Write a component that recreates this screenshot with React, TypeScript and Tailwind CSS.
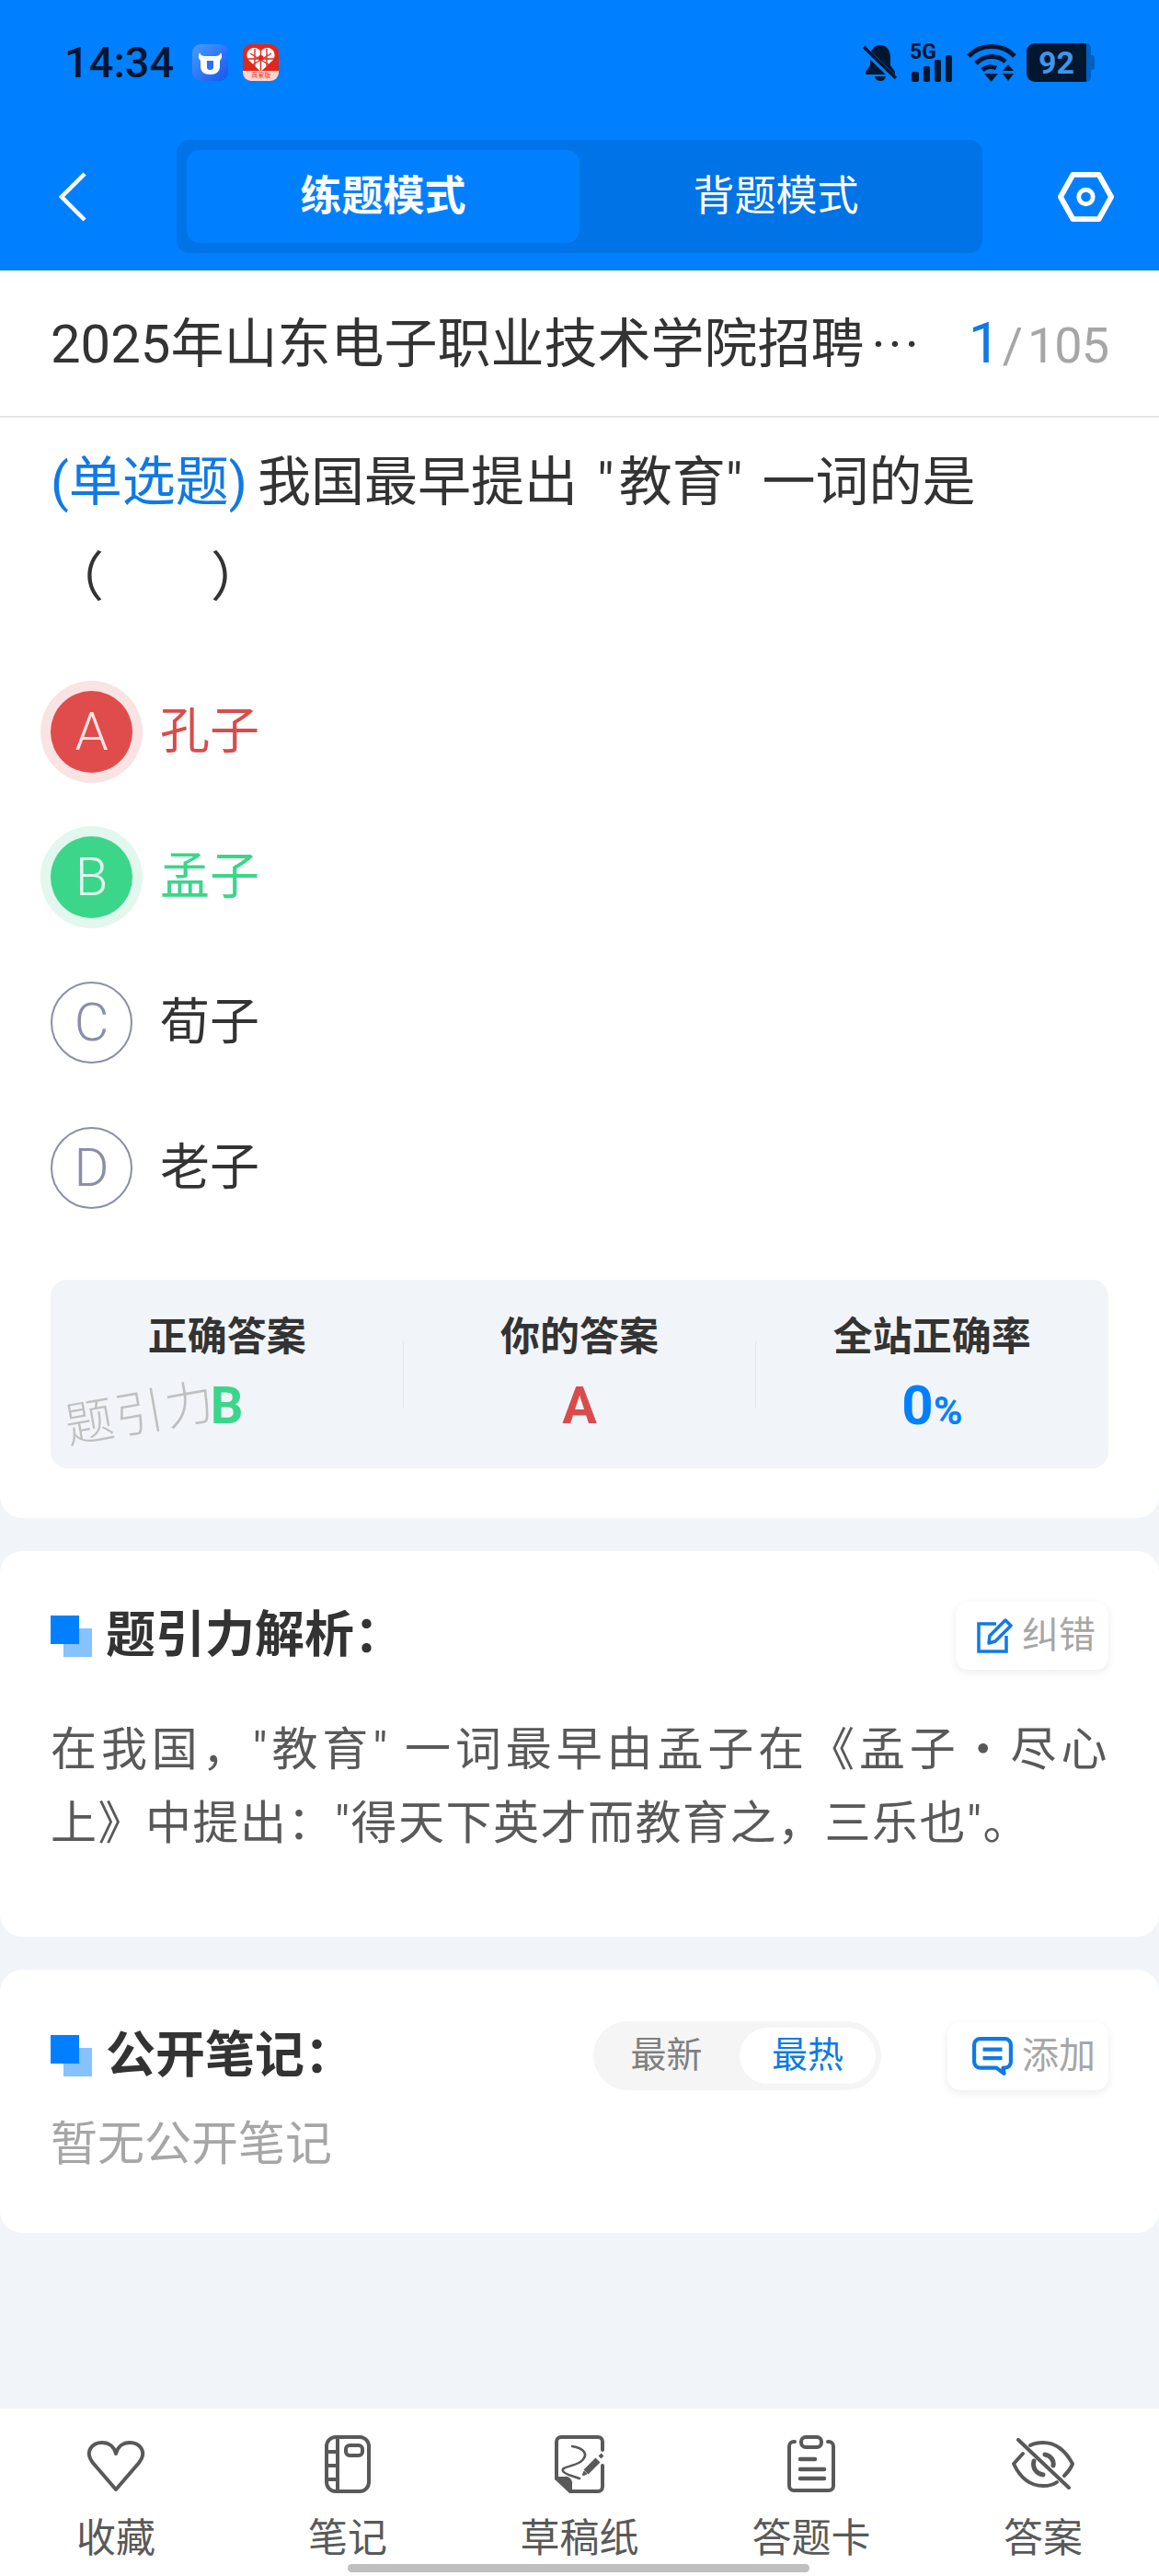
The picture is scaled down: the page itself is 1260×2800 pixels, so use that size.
import type { ReactNode } from 'react'

const HeartIcon = () => (
  <svg className="mt-[6px]" width="64" height="58" viewBox="0 0 64 58" fill="none" stroke="#595959" strokeWidth="4" strokeLinejoin="round">
    <path d="M32 54 L7 25 C-3 12 7 3 17 3 C24 3 30 7 32 15 C34 7 40 3 47 3 C57 3 67 12 57 25 Z" />
  </svg>
)

const NotebookIcon = () => (
  <svg width="50" height="63" viewBox="0 0 50 63" fill="none" stroke="#595959" strokeWidth="4">
    <rect x="2" y="2" width="46" height="59" rx="10" />
    <path d="M14 2 V61 M2 18 H14 M2 33 H14 M2 48 H14" />
    <rect x="23" y="11" width="18" height="11" rx="4" />
  </svg>
)

const SketchIcon = () => (
  <svg width="54" height="63" viewBox="14 13 54 63" fill="none" stroke="#595959" strokeWidth="4" strokeLinecap="round" strokeLinejoin="round">
    <path d="M16 60 V20 a5 5 0 0 1 5 -5 H61 a5 5 0 0 1 5 5 V29 M66 46 V69 a5 5 0 0 1 -5 5 H31" />
    <path d="M16 60 L31 74 V66 a5 5 0 0 0 -6 -6 Z" fill="#595959" />
    <path d="M33 25 C46 27 52 34 42 42 C32 48 21 47 23 52 C25 56 34 57 41 60" strokeWidth="2.6" />
    <path d="M48 53 L61 40" strokeWidth="7" strokeLinecap="butt" />
    <path d="M63 37 L66 34" strokeWidth="4" strokeLinecap="butt" />
    <path d="M45 56 L46 53 L48 55 Z" strokeWidth="2" fill="#595959" />
  </svg>
)

const ClipboardIcon = () => (
  <svg width="54" height="63" viewBox="0 0 54 63" fill="none" stroke="#595959" strokeWidth="4" strokeLinecap="round">
    <path d="M9 7 H8 a5 5 0 0 0 -5 5 V55 a5 5 0 0 0 5 5 H46 a5 5 0 0 0 5 -5 V12 a5 5 0 0 0 -5 -5 H45" />
    <rect x="16" y="2" width="22" height="11" rx="5" />
    <path d="M15 26 H31 M15 37 H41 M15 47 H41" strokeWidth="4.5" />
  </svg>
)

const EyeOffIcon = () => (
  <svg width="70" height="56" viewBox="0 0 70 56" fill="none" stroke="#595959" strokeWidth="4" strokeLinecap="round" strokeLinejoin="round">
    <path d="M13 17 L3 28 C10 43 21 52 35 52 C41 52 46 51 50 48" />
    <path d="M21 8 C25 6 30 5 35 5 C49 5 60 15 67 28 C65 34 61 38 58 41" />
    <path d="M37 18 C43 19 47 24 46 30" strokeWidth="5" />
    <path d="M25 25 C23 33 28 39 35 40" strokeWidth="5" />
    <path d="M8 2 L63 54" />
  </svg>
)

const BullLogo = () => (
  <svg width="39" height="40" viewBox="0 0 39 40">
    <defs>
      <linearGradient id="bull" x1="0" y1="0" x2="1" y2="1">
        <stop offset="0" stopColor="#4a9bff" />
        <stop offset="1" stopColor="#1458ee" />
      </linearGradient>
    </defs>
    <rect width="39" height="40" rx="9" fill="url(#bull)" />
    <path d="M8 9 C9 12 11 13 14 13 H25 C28 13 30 12 31 9 C33 13 32 16 30 18 V24 C30 30 26 33 19.5 33 C13 33 9 30 9 24 V18 C7 16 6 13 8 9 Z" fill="#fff" />
    <path d="M16 18 H23 V25 C23 27 22 28 19.5 28 C17 28 16 27 16 25 Z" fill="#2a72f5" />
  </svg>
)

const ShopLogo = () => (
  <div className="relative w-[39px] h-[40px] rounded-[9px] overflow-hidden bg-[#e0281c]">
    <svg className="absolute inset-0" width="39" height="40" viewBox="0 0 39 40">
      <path d="M19.5 30 L6 17 C2 11 6 4 12 4 C15 4 18 5 19.5 8 C21 5 24 4 27 4 C33 4 37 11 33 17 Z" fill="#fff" />
      <path d="M19.5 6 V30 M8 10 L31 24 M31 10 L8 24 M5 16 H34 M13 5 L13 24 M26 5 L26 24" stroke="#e0281c" strokeWidth="1.4" />
      <circle cx="19.5" cy="15" r="3" fill="#e0281c" />
    </svg>
    <div className="absolute bottom-0 left-0 right-0 h-[11px] bg-[#fbd5cf] text-[7px] leading-[11px] text-center text-[#d9362b] whitespace-nowrap">
      商家版
    </div>
  </div>
)

const StatusIcons = () => (
  <div className="flex items-center">
    <svg width="40" height="42" viewBox="0 0 40 42">
      <path d="M20 2 C27 2 31 8 31 15 V24 L36 31 V34 H4 V31 L9 24 V15 C9 8 13 2 20 2 Z" fill="#00172f" />
      <path d="M14 36 H26 C25 40 23 41 20 41 C17 41 15 40 14 36 Z" fill="#00172f" />
      <path d="M1 5 L37 40" stroke="#0080ff" strokeWidth="7" />
      <path d="M2 4 L37 38" stroke="#00172f" strokeWidth="3.5" />
    </svg>
    <div className="relative w-[50px] h-[42px] ml-[12px]">
      <span className="absolute left-0 top-[-6px] text-[23px] leading-[32px] font-bold text-[#00172f]">5G</span>
      <div className="absolute left-[2px] bottom-0 flex items-end gap-[5px]">
        <div className="w-[8px] h-[11px] rounded-[2px] bg-[#00172f]" />
        <div className="w-[7px] h-[17px] rounded-[2px] bg-[#00172f]" />
        <div className="w-[7px] h-[24px] rounded-[2px] bg-[#00172f]" />
        <div className="w-[7px] h-[29px] rounded-[2px] bg-[#00172f]" />
      </div>
    </div>
    <svg className="ml-[12px]" width="54" height="42" viewBox="0 0 54 42" fill="none" stroke="#00172f" strokeWidth="5">
      <path d="M2 14 C15 0 39 0 52 14" />
      <path d="M10 22 C18 13 33 12 42 20" />
      <path d="M17 29 C22 25 28 25 32 27" />
      <path d="M19 33 H34 L26.5 42 Z" fill="#00172f" stroke="none" />
      <path d="M45 23 L51 30 H39 Z M39 33 H51 L45 41 Z" fill="#00172f" stroke="none" />
    </svg>
    <div className="ml-[11px] w-[74px] h-[42px] flex items-center">
      <div className="w-[65px] h-[42px] rounded-l-[9px] bg-[#00172f] flex items-center justify-center text-[34px] font-bold text-[#3f96ee] leading-none">
        92
      </div>
      <div className="w-[5px] h-[42px] rounded-r-[6px] bg-[#0060c4]" />
      <div className="w-[4px] h-[16px] rounded-r-[3px] bg-[#0060c4]" />
    </div>
  </div>
)

const SectionMark = () => (
  <div className="relative w-[45px] h-[45px] shrink-0">
    <div className="absolute right-0 bottom-0 w-[31px] h-[31px] bg-[#85c2ff]" />
    <div className="absolute left-0 top-0 w-[31px] h-[31px] bg-[#0080ff]" />
  </div>
)

const ToolButton = ({ icon, label, width }: { icon: ReactNode; label: string; width: string }) => (
  <div className={`${width} h-[74px] rounded-[14px] bg-white shadow-[0_3px_10px_rgba(0,0,0,0.08)] flex items-center justify-end pr-[14px] gap-[10px] text-[40px] text-[#a6a6a6]`}>
    {icon}
    <span>{label}</span>
  </div>
)

const options = [
  { key: 'A', text: '孔子', state: 'wrong' },
  { key: 'B', text: '孟子', state: 'right' },
  { key: 'C', text: '荀子', state: 'none' },
  { key: 'D', text: '老子', state: 'none' },
]

const navItems = [
  { label: '收藏', icon: <HeartIcon /> },
  { label: '笔记', icon: <NotebookIcon /> },
  { label: '草稿纸', icon: <SketchIcon /> },
  { label: '答题卡', icon: <ClipboardIcon /> },
  { label: '答案', icon: <EyeOffIcon /> },
]

export default function App() {
  return (
    <div className="relative w-full min-h-[2800px] flex flex-col bg-[#f1f5f9] font-['Roboto','Noto_Sans_CJK_SC',sans-serif] text-[#333333]">
      {/* header */}
      <div className="h-[294px] bg-[#0080ff]">
        <div className="h-[152px] pt-[47px] pl-[70px] pr-[70px] flex items-start justify-between">
          <div className="flex items-center h-[42px]">
            <span className="text-[47px] leading-[42px] font-medium text-[#00172f]">14:34</span>
            <div className="ml-[20px]"><BullLogo /></div>
            <div className="ml-[16px]"><ShopLogo /></div>
          </div>
          <StatusIcons />
        </div>
        <div className="flex items-center pl-[64px]">
          <svg width="30" height="54" viewBox="0 0 30 54" fill="none" stroke="#ffffff" strokeWidth="4.5">
            <path d="M28 2 L3 27 L28 52" />
          </svg>
          <div className="ml-[98px] w-[876px] h-[123px] p-[11px] rounded-[14px] bg-[#0073e6] flex">
            <div className="w-[427px] rounded-[14px] bg-[#0080ff] flex items-center justify-center text-[45px] font-bold text-white">
              练题模式
            </div>
            <div className="flex-1 flex items-center justify-center text-[45px] text-white">背题模式</div>
          </div>
          <svg className="ml-[82px]" width="61" height="56" viewBox="0 0 63 56" fill="none" stroke="#ffffff" strokeWidth="6" strokeLinejoin="round">
            <path d="M17 3 H46 L60 28 L46 53 H17 L3 28 Z" />
            <circle cx="31.5" cy="28" r="8" strokeWidth="5" />
          </svg>
        </div>
      </div>

      {/* question card */}
      <div className="bg-white rounded-b-[24px] pb-[54px]">
        <div className="h-[160px] pt-[2px] px-[55px] border-b-2 border-[#e5e5e5] flex items-center justify-between">
          <div className="text-[58px] leading-[80px] whitespace-nowrap">
            2025年山东电子职业技术学院招聘<span className="ml-[8px] tracking-[3px]">···</span>
          </div>
          <div className="flex items-baseline">
            <span className="text-[62px] leading-[80px] text-[#0f7ae5]">1</span>
            <span className="ml-[2px] text-[54px] leading-[80px] text-[#a6a6a6]">/</span>
            <span className="ml-[5px] text-[54px] leading-[80px] tracking-[-1px] text-[#a6a6a6]">105</span>
          </div>
        </div>

        <div className="mt-[18px] px-[55px] text-[58px] leading-[104px]">
          <div className="whitespace-nowrap">
            <span className="text-[#0f7ae5]">(单选题)</span>
            <span className="ml-[11px]">我国最早提出</span>
            <span className="ml-[21px] tracking-[5px]">"</span>教育"
            <span className="ml-[7px]"> 一词的是</span>
          </div>
          <div>（　　）</div>
        </div>

        <div className="mt-[36px] px-[55px] flex flex-col">
          {options.map((o) => (
            <div key={o.key} className="h-[158px] flex items-center">
              {o.state === 'wrong' && (
                <div className="w-[89px] h-[89px] rounded-full bg-[#e04b4b] ring-[11px] ring-[#f9e3e3] flex items-center justify-center text-[58px] font-light text-[#fbe3e3]">
                  {o.key}
                </div>
              )}
              {o.state === 'right' && (
                <div className="w-[89px] h-[89px] rounded-full bg-[#3bd68a] ring-[11px] ring-[#e2f7ed] flex items-center justify-center text-[58px] font-light text-[#e2f7ed]">
                  {o.key}
                </div>
              )}
              {o.state === 'none' && (
                <div className="w-[89px] h-[89px] rounded-full border-[2.5px] border-[#8a8fa8] flex items-center justify-center text-[58px] font-light text-[#8a8fa8]">
                  {o.key}
                </div>
              )}
              <span
                className={
                  o.state === 'wrong'
                    ? 'ml-[30px] text-[54px] text-[#d94c4c]'
                    : o.state === 'right'
                      ? 'ml-[30px] text-[54px] text-[#3bd68a]'
                      : 'ml-[30px] text-[54px] text-[#333333]'
                }
              >
                {o.text}
              </span>
            </div>
          ))}
        </div>

        <div className="relative mt-[43px] mx-[55px] h-[205px] rounded-[18px] bg-[#f1f5f9] grid grid-cols-3">
          <div className="flex flex-col items-center pt-[32px]">
            <div className="text-[43px] leading-[60px] font-bold">正确答案</div>
            <div className="mt-[15px] text-[56px] leading-[60px] font-bold text-[#3bd68a]">B</div>
          </div>
          <div className="flex flex-col items-center pt-[32px] relative">
            <div className="absolute left-0 top-[67px] h-[73px] w-[1px] bg-[#e4e7eb]" />
            <div className="absolute right-0 top-[67px] h-[73px] w-[1px] bg-[#e4e7eb]" />
            <div className="text-[43px] leading-[60px] font-bold">你的答案</div>
            <div className="mt-[15px] text-[56px] leading-[60px] font-bold text-[#d94c4c]">A</div>
          </div>
          <div className="flex flex-col items-center pt-[32px]">
            <div className="text-[43px] leading-[60px] font-bold">全站正确率</div>
            <div className="mt-[15px] text-[60px] leading-[60px] font-bold text-[#0080ff]">
              0<span className="text-[43px]">%</span>
            </div>
          </div>
          <div className="absolute left-[15px] top-[114px] text-[53px] leading-[64px] text-[#bfbfbf] font-light rotate-[-10deg] tracking-[2px]">
            题引力
          </div>
        </div>
      </div>

      {/* analysis card */}
      <div className="mt-[36px] bg-white rounded-[24px] px-[55px] pt-[55px] pb-[83px]">
        <div className="flex items-center justify-between">
          <div className="flex items-center">
            <SectionMark />
            <span className="ml-[15px] text-[54px] font-bold leading-[74px]">题引力解析：</span>
          </div>
          <ToolButton
            width="w-[166px]"
            label="纠错"
            icon={
              <svg width="40" height="40" viewBox="0 0 40 40" fill="none" stroke="#0f7ae5" strokeWidth="3.5">
                <path d="M22 7 H3 V37 H33 V20" />
                <path d="M14 28 L15 20 L32 3 L38 9 L21 26 Z" strokeLinejoin="round" />
              </svg>
            }
          />
        </div>
        <div className="mt-[47px] text-[50px] leading-[80px] tracking-[1.5px] text-[#595959] text-justify">
          在我国，"教育" 一词最早由孟子在《孟子・尽心上》中提出："得天下英才而教育之，三乐也"。
        </div>
      </div>

      {/* notes card */}
      <div className="mt-[36px] bg-white rounded-[24px] px-[55px] pt-[56px] pb-[61px]">
        <div className="flex items-center">
          <SectionMark />
          <span className="ml-[15px] text-[54px] font-bold leading-[74px]">公开笔记：</span>
          <div className="ml-auto w-[313px] h-[75px] rounded-full bg-[#f5f5f5] flex items-center pr-[6px] text-[39px]">
            <span className="flex-1 text-center text-[#808080]">最新</span>
            <span className="w-[148px] h-[61px] rounded-full bg-white flex items-center justify-center text-[#0f7ae5]">最热</span>
          </div>
          <div className="ml-[72px]">
            <ToolButton
              width="w-[175px]"
              label="添加"
              icon={
                <svg width="44" height="42" viewBox="0 0 42 40" fill="none" stroke="#0f7ae5" strokeWidth="4" strokeLinejoin="round">
                  <path d="M8 2 H34 a6 6 0 0 1 6 6 V26 a6 6 0 0 1 -6 6 H32 L33 38 L25 32 H8 a6 6 0 0 1 -6 -6 V8 a6 6 0 0 1 6 -6 Z" />
                  <path d="M11 13 H31 M11 22 H31" />
                </svg>
              }
            />
          </div>
        </div>
        <div className="mt-[24px] text-[51px] leading-[70px] text-[#a6a6a6]">暂无公开笔记</div>
      </div>

      {/* bottom nav */}
      <div className="mt-auto h-[182px] bg-white grid grid-cols-5">
        {navItems.map((item) => (
          <div key={item.label} className="flex flex-col items-center pt-[27px]">
            <div className="h-[66px] flex items-center justify-center">{item.icon}</div>
            <div className="mt-[23px] text-[43px] leading-[50px] text-[#595959]">{item.label}</div>
          </div>
        ))}
      </div>
      <div className="absolute left-[378px] bottom-[4px] w-[502px] h-[9px] rounded-full bg-[#bfbfbf]" />
    </div>
  )
}
